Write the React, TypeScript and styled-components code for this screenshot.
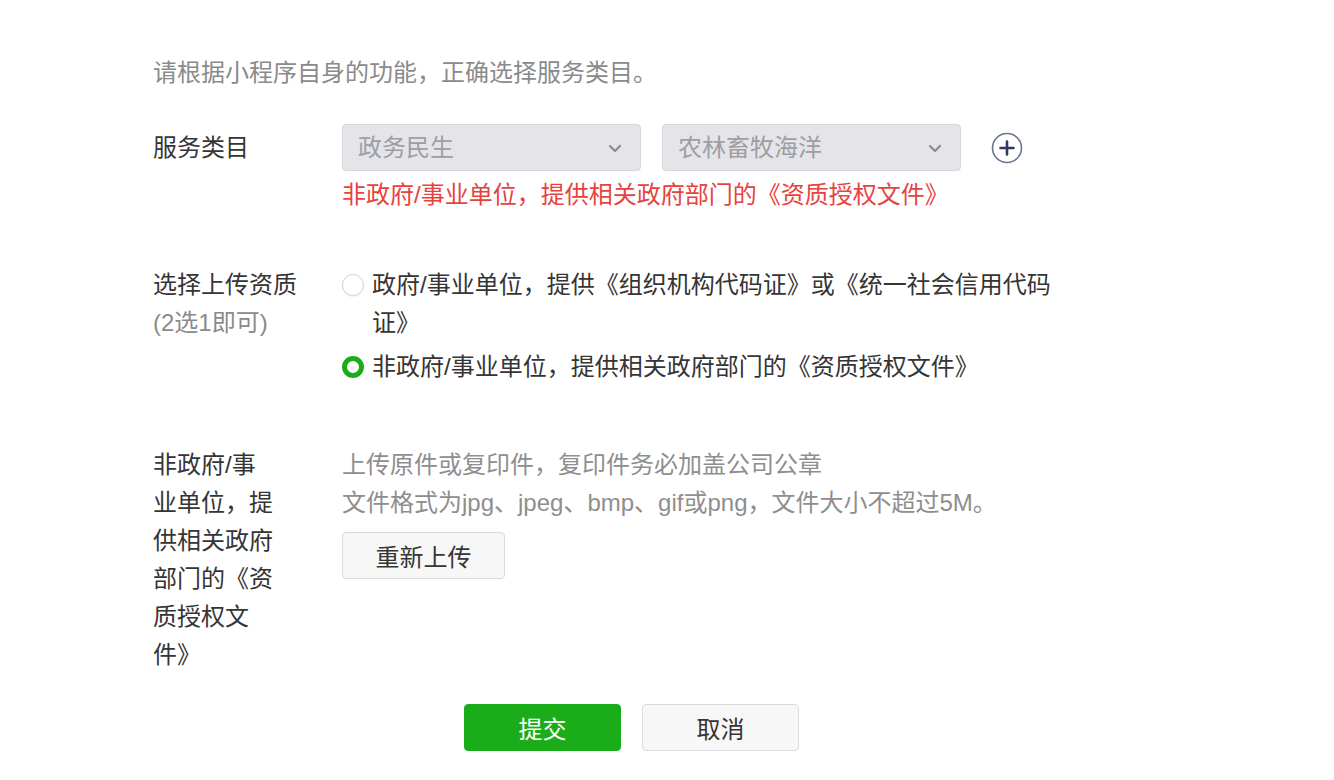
import React from "react";
import styled, { createGlobalStyle } from "styled-components";

const GlobalStyle = createGlobalStyle`
  html, body {
    margin: 0;
    padding: 0;
    background: #ffffff;
  }
  body {
    font-family: "Liberation Sans", "Noto Sans CJK SC", sans-serif;
    color: #353535;
    font-size: 24px;
  }
`;

const Page = styled.div`
  width: 1334px;
  min-height: 780px;
  box-sizing: border-box;
  padding: 54px 0 0 153px;
`;

const Intro = styled.p`
  margin: 0;
  font-size: 24px;
  line-height: 38px;
  color: #8a8a8a;
`;

const FormRow = styled.div<{ $top: number }>`
  display: flex;
  align-items: flex-start;
  margin-top: ${(p) => p.$top}px;
`;

const Label = styled.div<{ $tall?: boolean }>`
  width: 189px;
  flex: none;
  font-size: 24px;
  line-height: ${(p) => (p.$tall ? "47px" : "38px")};
  color: #353535;
`;

const LabelText = styled.div<{ $narrow?: boolean }>`
  width: ${(p) => (p.$narrow ? "122px" : "auto")};
`;

const SubLabel = styled.div`
  color: #8a8a8a;
`;

const Content = styled.div`
  display: flex;
  flex-direction: column;
`;

const SelectLine = styled.div`
  display: flex;
  align-items: center;
  gap: 21px;
`;

const SelectBox = styled.div`
  width: 299px;
  height: 47px;
  box-sizing: border-box;
  border: 1px solid #d6d6db;
  border-radius: 4px;
  background: #e4e4e9;
  display: flex;
  align-items: center;
  justify-content: space-between;
  padding: 0 18px 4px 15px;
  color: #9e9ea3;
  font-size: 24px;
`;

const ChevronWrap = styled.span`
  display: inline-flex;
  margin-top: 6px;
`;

const AddButton = styled.span`
  display: inline-flex;
  width: 32px;
  height: 32px;
  margin-left: 9px;
`;

const ErrorText = styled.div`
  margin-top: 5px;
  color: #e64340;
  font-size: 24px;
  line-height: 38px;
`;

const RadioItem = styled.label<{ $gap?: number }>`
  display: flex;
  align-items: flex-start;
  margin-top: ${(p) => p.$gap || 0}px;
  font-size: 24px;
  line-height: 38px;
  color: #353535;
`;

const RadioMark = styled.span<{ $checked?: boolean }>`
  flex: none;
  width: 22px;
  height: 22px;
  box-sizing: border-box;
  border-radius: 50%;
  margin-top: 8px;
  margin-right: 8px;
  background: #ffffff;
  border: ${(p) => (p.$checked ? "5px solid #1aad19" : "1px solid #d4d4d4")};
  box-shadow: ${(p) => (p.$checked ? "none" : "0 1px 2px rgba(0,0,0,0.06)")};
`;

const RadioText = styled.span`
  max-width: 690px;
`;

const Hint = styled.div`
  font-size: 24px;
  line-height: 38px;
  color: #8e8e8e;
`;

const Button = styled.button<{ $primary?: boolean; $w: number }>`
  width: ${(p) => p.$w}px;
  height: 47px;
  box-sizing: border-box;
  border-radius: 4px;
  font-family: "Liberation Sans", "Noto Sans CJK SC", sans-serif;
  font-size: 24px;
  padding: 0;
  cursor: pointer;
  border: 1px solid ${(p) => (p.$primary ? "#1aad19" : "#d9dadd")};
  background: ${(p) => (p.$primary ? "#1aad19" : "#f7f7f8")};
  color: ${(p) => (p.$primary ? "#ffffff" : "#353535")};
`;

const UploadButton = styled(Button)`
  margin-top: 10px;
`;

const Footer = styled.div`
  display: flex;
  gap: 21px;
  margin-top: 30px;
  padding-left: 311px;
`;

const Chevron = () => (
  <svg width="14" height="9" viewBox="0 0 14 9">
    <path d="M2 2 L7 7 L12 2" fill="none" stroke="#8a8a8f" strokeWidth="2.2" strokeLinecap="round" strokeLinejoin="round" />
  </svg>
);

const PlusCircle = () => (
  <svg width="32" height="32" viewBox="0 0 32 32">
    <circle cx="16" cy="16" r="14.5" fill="#ffffff" stroke="#6a7391" strokeWidth="1.6" />
    <path d="M16 9.5 V22.5 M9.5 16 H22.5" stroke="#2c3a69" strokeWidth="2.6" strokeLinecap="round" />
  </svg>
);

export default function App() {
  return (
    <>
      <GlobalStyle />
      <Page>
        <Intro>请根据小程序自身的功能，正确选择服务类目。</Intro>

        <FormRow $top={32}>
          <Label $tall>服务类目</Label>
          <Content>
            <SelectLine>
              <SelectBox>
                <span>政务民生</span>
                <ChevronWrap>
                  <Chevron />
                </ChevronWrap>
              </SelectBox>
              <SelectBox>
                <span>农林畜牧海洋</span>
                <ChevronWrap>
                  <Chevron />
                </ChevronWrap>
              </SelectBox>
              <AddButton>
                <PlusCircle />
              </AddButton>
            </SelectLine>
            <ErrorText>非政府/事业单位，提供相关政府部门的《资质授权文件》</ErrorText>
          </Content>
        </FormRow>

        <FormRow $top={52}>
          <Label>
            <LabelText>选择上传资质</LabelText>
            <SubLabel>(2选1即可)</SubLabel>
          </Label>
          <Content>
            <RadioItem>
              <RadioMark />
              <RadioText>政府/事业单位，提供《组织机构代码证》或《统一社会信用代码证》</RadioText>
            </RadioItem>
            <RadioItem $gap={6}>
              <RadioMark $checked />
              <RadioText>非政府/事业单位，提供相关政府部门的《资质授权文件》</RadioText>
            </RadioItem>
          </Content>
        </FormRow>

        <FormRow $top={60}>
          <Label>
            <LabelText $narrow>非政府/事业单位，提供相关政府部门的《资质授权文件》</LabelText>
          </Label>
          <Content>
            <Hint>上传原件或复印件，复印件务必加盖公司公章</Hint>
            <Hint>文件格式为jpg、jpeg、bmp、gif或png，文件大小不超过5M。</Hint>
            <div>
              <UploadButton $w={163}>重新上传</UploadButton>
            </div>
          </Content>
        </FormRow>

        <Footer>
          <Button $primary $w={157}>提交</Button>
          <Button $w={157}>取消</Button>
        </Footer>
      </Page>
    </>
  );
}
